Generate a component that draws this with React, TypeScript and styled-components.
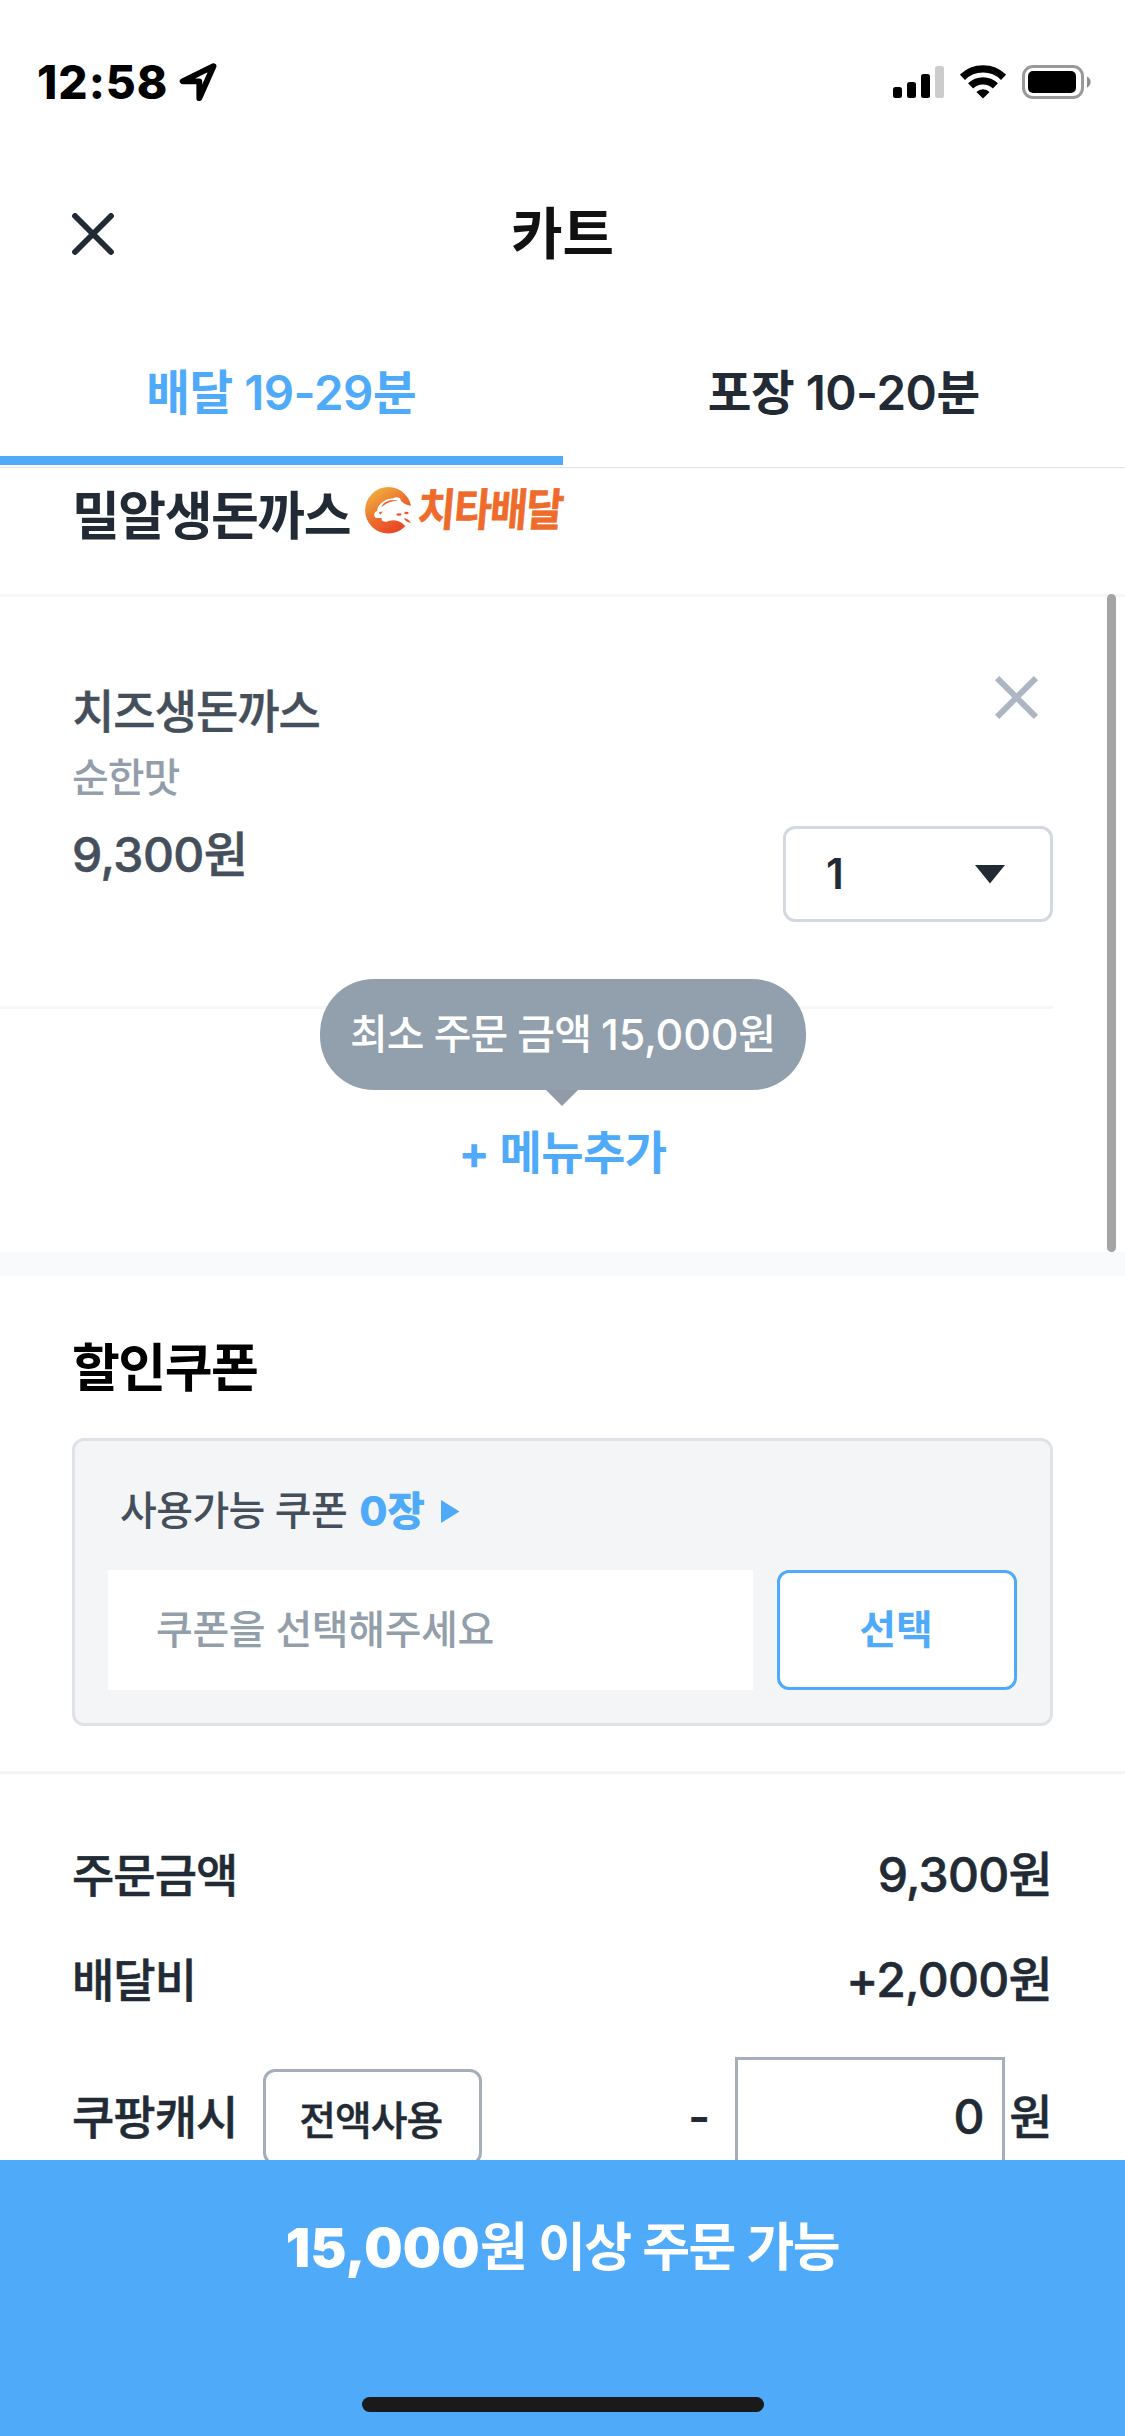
import React from "react";
import styled, { createGlobalStyle, css } from "styled-components";

const color = {
  ink: "#222b35",
  slate: "#454f5b",
  muted: "#939eab",
  blue: "#4fabfa",
  border: "#a5aeba",
};

const GlobalStyle = createGlobalStyle`
  *, *::before, *::after { box-sizing: border-box; }
  body {
    margin: 0;
    background: #fff;
    font-family: Inter, "Noto Sans CJK KR", sans-serif;
    -webkit-font-smoothing: antialiased;
  }
  button { font-family: inherit; padding: 0; margin: 0; background: none; border: 0; }
  svg { display: block; flex: none; }
`;

const Screen = styled.div`
  width: 1125px;
  height: 2436px;
  display: flex;
  flex-direction: column;
  overflow: hidden;
  background: #fff;
  color: ${color.ink};
`;

interface TextProps {
  $size?: number;
  $weight?: number;
  $track?: number;
  $color?: string;
  $line?: number;
  $stroke?: number;
}

const Text = styled.span<TextProps>`
  display: block;
  white-space: pre;
  font-size: ${(p) => p.$size ?? 46}px;
  font-weight: ${(p) => p.$weight ?? 500};
  letter-spacing: ${(p) => p.$track ?? 0}px;
  line-height: ${(p) => p.$line ?? 60}px;
  color: ${(p) => p.$color ?? "inherit"};
  ${(p) => p.$stroke && css`-webkit-text-stroke: ${p.$stroke}px currentColor;`}
`;

const StatusBar = styled.div`
  flex: none;
  height: 132px;
  padding: 32px 33px 0 37px;
  display: flex;
  justify-content: space-between;
`;

const StatusGroup = styled.div<{ $gap: number }>`
  height: 100px;
  display: flex;
  align-items: center;
  gap: ${(p) => p.$gap}px;
`;

const Header = styled.header`
  flex: none;
  height: 204px;
  padding: 0 72px;
  display: grid;
  grid-template-columns: 42px 1fr 42px;
  align-items: center;
  text-align: center;
`;

const Tabs = styled.nav`
  flex: none;
  height: 132px;
  display: flex;
  border-bottom: 1px solid #e1e1e1;
`;

const Tab = styled.button<{ $active?: boolean }>`
  flex: 1;
  display: flex;
  flex-direction: column;
  align-items: center;
  justify-content: center;
  margin-bottom: 2px;
  padding-bottom: 7px;
  border-bottom: 9px solid ${(p) => (p.$active ? color.blue : "transparent")};
  color: ${(p) => (p.$active ? color.blue : color.ink)};
`;

const CartScroll = styled.section`
  position: relative;
  flex: none;
  height: 784px;
`;

const ScrollThumb = styled.div`
  position: absolute;
  top: 126px;
  right: 9px;
  width: 9px;
  height: 658px;
  border-radius: 5px;
  background: #a4a4a4;
`;

const StoreRow = styled.div`
  height: 129px;
  padding: 17px 72px 0;
  display: flex;
  align-items: flex-start;
  border-bottom: 3px solid #f7f7f7;
`;

const CheetahBadge = styled.div`
  display: flex;
  align-items: center;
  gap: 6px;
  height: 50px;
  margin: 0 0 0 15px;
`;

const BadgeWord = styled(Text)`
  transform: skewX(-5deg) scaleX(0.91);
  transform-origin: left center;
`;

const CartItem = styled.article`
  height: 412px;
  width: 1053px;
  padding: 79px 0 84px 72px;
  display: flex;
  justify-content: space-between;
  border-bottom: 3px solid #f7f7f8;
`;

const ItemInfo = styled.div`
  display: flex;
  flex-direction: column;
  padding-top: 2px;
`;

const ItemActions = styled.div`
  display: flex;
  flex-direction: column;
  justify-content: space-between;
  align-items: flex-end;
`;

const RemoveButton = styled.button`
  margin-right: 15px;
`;

const QuantitySelect = styled.button`
  width: 270px;
  height: 96px;
  padding: 0 45px 0 40px;
  display: flex;
  align-items: center;
  justify-content: space-between;
  border: 3px solid #d3d8e1;
  border-radius: 12px;
  color: ${color.ink};
`;

const AddMenu = styled.div`
  position: relative;
  height: 243px;
  padding-top: 113px;
  display: flex;
  justify-content: center;
`;

const Tooltip = styled.div`
  position: absolute;
  top: -30px;
  left: 320px;
  width: 486px;
  height: 111px;
  padding-bottom: 2px;
  display: flex;
  align-items: center;
  justify-content: center;
  border-radius: 54px;
  background: #929fac;
  color: #fff;

  &::after {
    content: "";
    position: absolute;
    top: 111px;
    left: 226px;
    border: 16.5px solid transparent;
    border-top: 16px solid #9299a7;
    border-bottom: 0;
  }
`;

const Band = styled.div`
  flex: none;
  height: 24px;
  background: #f9fafc;
`;

const CouponSection = styled.section`
  flex: none;
  height: 498px;
  padding: 63px 72px 0;
  border-bottom: 3px solid #f3f4f7;
`;

const CouponBox = styled.div`
  height: 288px;
  margin-top: 39px;
  padding: 40px 33px 0;
  border: 3px solid #e0e2e8;
  border-radius: 12px;
  background: #f3f5f7;
`;

const CouponCount = styled.div`
  display: flex;
  align-items: center;
  padding-left: 12px;
`;

const CouponPicker = styled.div`
  display: flex;
  gap: 24px;
  margin-top: 29px;
`;

const CouponField = styled.div`
  width: 645px;
  height: 120px;
  padding-left: 48px;
  display: flex;
  align-items: center;
  background: #fff;
`;

const OutlineButton = styled.button<{ $w: number; $h: number; $c: string; $t: string; $nudge?: string }>`
  width: ${(p) => p.$w}px;
  height: ${(p) => p.$h}px;
  padding: ${(p) => p.$nudge ?? "0"};
  display: flex;
  align-items: center;
  justify-content: center;
  border: 3px solid ${(p) => p.$c};
  border-radius: 12px;
  background: #fff;
  color: ${(p) => p.$t};
`;

const Summary = styled.section`
  flex: none;
  height: 386px;
  padding: 48px 73px 0 72px;
  overflow: hidden;
`;

const SummaryRow = styled.div`
  height: 105px;
  display: flex;
  align-items: center;
  justify-content: space-between;
`;

const CashRow = styled.div`
  height: 120px;
  margin-top: 25px;
  display: flex;
  align-items: center;
`;

const CashInput = styled.div`
  width: 270px;
  height: 120px;
  margin-left: 25px;
  padding-right: 18px;
  display: flex;
  align-items: center;
  justify-content: flex-end;
  border: 3px solid ${color.border};
`;

const Footer = styled.footer`
  flex: none;
  height: 276px;
  padding: 58px 0 24px;
  display: flex;
  flex-direction: column;
  align-items: center;
  justify-content: space-between;
  background: ${color.blue};
  color: #fff;
`;

const FooterLabel = styled.div`
  display: flex;
`;

const HomeIndicator = styled.div`
  width: 402px;
  height: 15px;
  border-radius: 8px;
  background: #1a1a1a;
`;

const LocationIcon = () => (
  <svg width="38" height="40" viewBox="0 0 38 40" fill="none" stroke="#000" strokeWidth="5.8" strokeLinejoin="round">
    <path d="M34.500 4.200 3.600 19.300H20.300V36.200Z" />
  </svg>
);

const SignalIcon = () => (
  <svg width="51" height="34" viewBox="0 0 51 34">
    <rect x="0" y="22" width="9" height="11" rx="2.5" />
    <rect x="14" y="17" width="9" height="16" rx="2.5" />
    <rect x="28" y="9" width="9" height="24" rx="2.5" />
    <rect x="42" y="1" width="9" height="32" rx="2.5" fill="#ccc" />
  </svg>
);

const WifiIcon = () => (
  <svg width="46" height="34" viewBox="0 0 46 34" fill="none" stroke="#000" strokeWidth="7.4">
    <path d="M2.4 12.3A29.5 29.5 0 0 1 43.6 12.3" />
    <path d="M10.6 20.9A17.8 17.8 0 0 1 35.4 20.9" />
    <path d="M16.4 27A9.400 9.400 0 0 1 29.6 27L23 33.4Z" fill="#000" stroke="none" />
  </svg>
);

const BatteryIcon = () => (
  <svg width="70" height="34" viewBox="0 0 70 34">
    <rect x="1.5" y="1.5" width="59" height="31" rx="9.5" fill="none" stroke="#999" strokeWidth="3" />
    <rect x="6" y="6" width="48" height="22" rx="5" />
    <path d="M65 11.5a6 6 0 0 1 0 11Z" fill="#8e8e8e" />
  </svg>
);

const CloseIcon = () => (
  <svg width="42" height="42" viewBox="0 0 42 42" stroke={color.ink} strokeWidth="5.8" strokeLinecap="round">
    <path d="M3 3 39 39M39 3 3 39" />
  </svg>
);

const RemoveIcon = () => (
  <svg width="43" height="43" viewBox="0 0 43 43" stroke="#afb6c3" strokeWidth="6">
    <path d="M2.1 2.1 40.9 40.9M40.9 2.1 2.1 40.9" />
  </svg>
);

const CheetahIcon = () => (
  <svg width="47" height="47" viewBox="0 0 47 47">
    <defs>
      <linearGradient id="cheetah" x1="0.1" y1="0.1" x2="0.7" y2="1">
        <stop offset="0" stopColor="#f0b03f" />
        <stop offset="0.55" stopColor="#ec6a2d" />
        <stop offset="1" stopColor="#e94325" />
      </linearGradient>
    </defs>
    <circle cx="23.3" cy="23.3" r="23.2" fill="url(#cheetah)" />
    <path
      d="M13 20C17 14 23 11 28 11.500C31 9 36 10 36 14C39 16 40 18 47 19V37L40 39C36 34 30 32 24 34C19 36 15 33 17 31L11 31C8 29 9 25 12 24Z"
      fill="#fff"
    />
    <path d="M18 17C23 12 29 12.500 33 14C27 13.500 21 15.500 16 21ZM14 25L18 24.500 15 28Z" fill="#ec6a2d" />
    <ellipse cx="34" cy="27.500" rx="2.600" ry="1.200" fill="#ea5a29" />
    <ellipse cx="41.500" cy="26" rx="2.200" ry="1.200" fill="#ea5a29" />
    <path d="M39 31Q44 32 46 36Q40 35 39 31Z" fill="#ea5a29" />
  </svg>
);

const DownTriangle = () => (
  <svg width="30" height="19" viewBox="0 0 30 19" fill={color.ink}>
    <path d="M0 0H30L15 18.600Z" />
  </svg>
);

const RightTriangle = () => (
  <svg width="19" height="23" viewBox="0 0 19 23" fill={color.blue}>
    <path d="M0 0L18.500 11.500L0 23Z" />
  </svg>
);

const Spacer = styled.div<{ $w?: number }>`
  ${(p) => (p.$w ? `width: ${p.$w}px;` : "flex: 1;")}
`;

export default function App() {
  return (
    <>
      <GlobalStyle />
      <Screen>
        <StatusBar>
          <StatusGroup $gap={11}>
            <Text $size={46} $weight={800} $track={1} $color="#000">12:58</Text>
            <LocationIcon />
          </StatusGroup>
          <StatusGroup $gap={16}>
            <SignalIcon />
            <WifiIcon />
            <BatteryIcon />
          </StatusGroup>
        </StatusBar>

        <Header>
          <button aria-label="close"><CloseIcon /></button>
          <Text $size={56} $weight={600} $color="#111">카트</Text>
        </Header>

        <Tabs>
          <Tab $active><Text $size={47.5} $weight={600} $track={-0.5}>배달 19-29분</Text></Tab>
          <Tab><Text $size={47.5} $weight={600} $track={-0.5}>포장 10-20분</Text></Tab>
        </Tabs>

        <CartScroll>
          <StoreRow>
            <Text $size={52} $weight={600} $track={-1.5} $line={64}>밀알생돈까스</Text>
            <CheetahBadge>
              <CheetahIcon />
              <BadgeWord $size={45} $weight={700} $track={-1.8} $color="#ee6b2b" $stroke={0.6}>치타배달</BadgeWord>
            </CheetahBadge>
          </StoreRow>

          <CartItem>
            <ItemInfo>
              <Text $size={46} $track={-1} $line={66} $color={color.slate} $stroke={0.4}>치즈생돈까스</Text>
              <Text $size={40} $track={-1} $line={68} $color={color.muted}>순한맛</Text>
              <Text $size={48} $track={-0.5} $line={86} $color={color.slate} $stroke={0.6}>9,300원</Text>
            </ItemInfo>
            <ItemActions>
              <RemoveButton aria-label="remove"><RemoveIcon /></RemoveButton>
              <QuantitySelect>
                <Text $size={42} $weight={600}>1</Text>
                <DownTriangle />
              </QuantitySelect>
            </ItemActions>
          </CartItem>

          <AddMenu>
            <Tooltip>
              <Text $size={41} $track={-0.9}>최소 주문 금액 </Text>
              <Text $size={43} $track={-0.2}>15,000</Text>
              <Text $size={41}>원</Text>
            </Tooltip>
            <Text $size={46} $weight={700} $track={-0.6} $color={color.blue}>+ 메뉴추가</Text>
          </AddMenu>
          <ScrollThumb />
        </CartScroll>

        <Band />

        <CouponSection>
          <Text $size={52} $weight={600} $track={-1.5} $color="#000">할인쿠폰</Text>
          <CouponBox>
            <CouponCount>
              <Text $size={40} $track={-0.6} $color={color.slate}>사용가능 쿠폰</Text>
              <Spacer $w={12} />
              <Text $size={41} $weight={800} $track={-0.5} $color={color.blue}>0장</Text>
              <Spacer $w={17} />
              <RightTriangle />
            </CouponCount>
            <CouponPicker>
              <CouponField>
                <Text $size={40} $track={-0.4} $color={color.muted}>쿠폰을 선택해주세요</Text>
              </CouponField>
              <OutlineButton $w={240} $h={120} $c={color.blue} $t={color.blue} $nudge="0 2px 0 0">
                <Text $size={40} $weight={700}>선택</Text>
              </OutlineButton>
            </CouponPicker>
          </CouponBox>
        </CouponSection>

        <Summary>
          <SummaryRow>
            <Text $size={46} $track={-1} $stroke={0.5}>주문금액</Text>
            <Text $size={48} $track={-0.7} $stroke={0.6}>9,300원</Text>
          </SummaryRow>
          <SummaryRow>
            <Text $size={46} $track={-1} $stroke={0.5}>배달비</Text>
            <Text $size={48} $track={-0.7} $stroke={0.6}>+2,000원</Text>
          </SummaryRow>
          <CashRow>
            <Text $size={46} $track={-1} $stroke={0.5}>쿠팡캐시</Text>
            <Spacer $w={26} />
            <OutlineButton $w={219} $h={96} $c={color.border} $t={color.ink} $nudge="7px 4px 0 0">
              <Text $size={40} $track={-1} $stroke={0.4}>전액사용</Text>
            </OutlineButton>
            <Spacer />
            <Text $size={48} $weight={600}>-</Text>
            <CashInput><Text $size={48} $stroke={0.6}>0</Text></CashInput>
            <Spacer $w={4} />
            <Text $size={47} $track={-0.6} $stroke={0.5}>원</Text>
          </CashRow>
        </Summary>

        <Footer>
          <FooterLabel>
            <Text $size={54} $weight={900} $track={0.2}>15,000</Text>
            <Text $size={52} $weight={600} $track={-1.5}>원 이상 주문 가능</Text>
          </FooterLabel>
          <HomeIndicator />
        </Footer>
      </Screen>
    </>
  );
}
